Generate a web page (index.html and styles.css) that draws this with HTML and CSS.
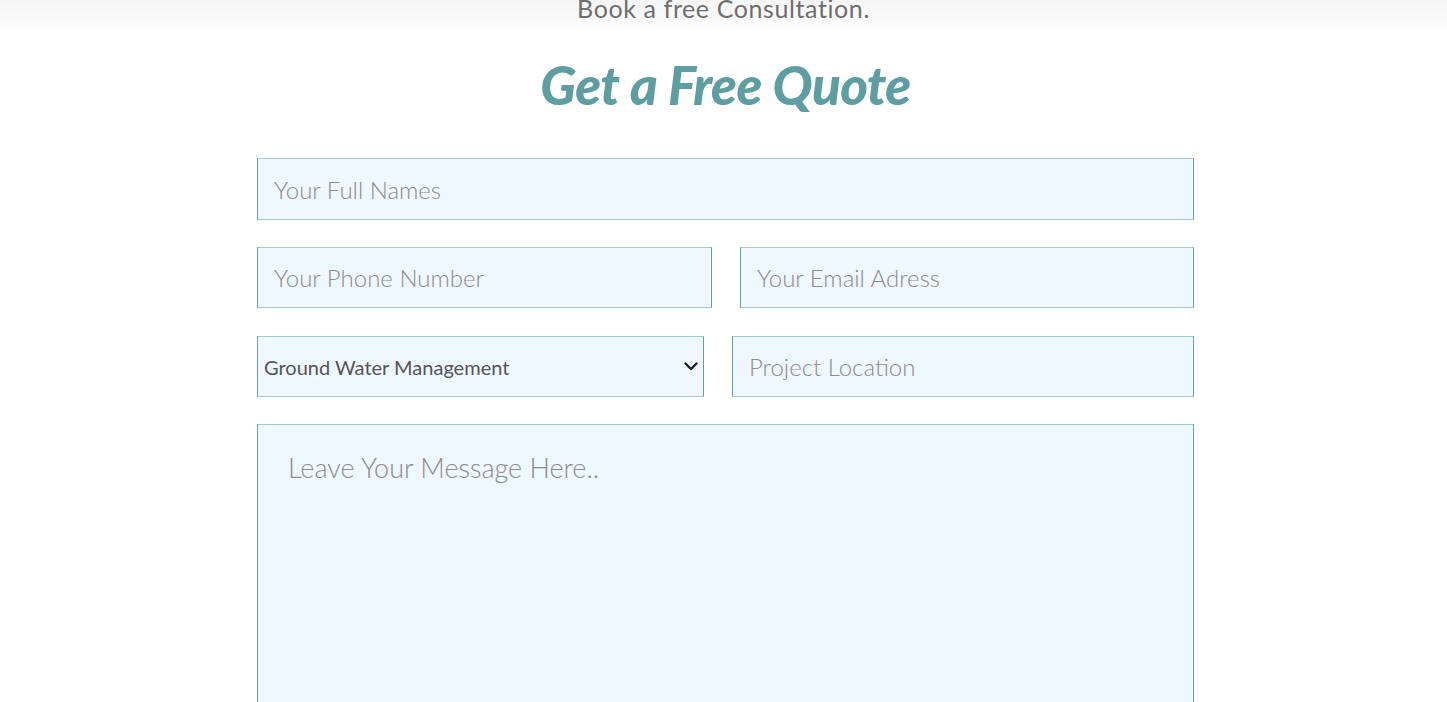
FILE: index.html
```html
<!DOCTYPE html>
<html lang="en">
<head>
<meta charset="utf-8">
<title>Get a Free Quote</title>
<link rel="stylesheet" href="styles.css">
</head>
<body>
<header class="topbar">
  <p class="topbar-text">Book a free Consultation.</p>
</header>
<main class="quote">
  <h1 class="quote-title">Get a Free Quote</h1>
  <form class="quote-form">
    <input class="field field-tall" type="text" placeholder="Your Full Names">
    <div class="row row-a">
      <input class="field" type="tel" placeholder="Your Phone Number">
      <input class="field" type="email" placeholder="Your Email Adress">
    </div>
    <div class="row row-b">
      <div class="select-wrap">
        <select class="field select">
          <option>Ground Water Management</option>
          <option>Borehole Drilling</option>
          <option>Pump Installation</option>
        </select>
        <svg class="chevron" width="14" height="9" viewBox="0 0 14 9" aria-hidden="true">
          <path d="M1.5 1.5 L7 7 L12.5 1.5" fill="none" stroke="#1e1e1e" stroke-width="2.4" stroke-linecap="round" stroke-linejoin="round"/>
        </svg>
      </div>
      <input class="field" type="text" placeholder="Project Location">
    </div>
    <textarea class="field message" placeholder="Leave Your Message Here.."></textarea>
  </form>
</main>
</body>
</html>
```
FILE: styles.css
```css
* { box-sizing: border-box; }
html, body { margin: 0; padding: 0; background: #ffffff; }
body { font-family: "Lato", "Open Sans", sans-serif; }

.topbar {
  height: 36px;
  overflow: hidden;
  background: linear-gradient(to bottom, #f5f5f5 0%, #fbfbfb 60%, #ffffff 100%);
  text-align: center;
}
.topbar-text {
  margin: 0;
  font-size: 25px;
  line-height: 17px;
  color: #6e6e6e;
  letter-spacing: 0.6px;
}

.quote {
  width: 937px;
  margin: 0 0 0 calc(50% - 466.5px);
}
.quote-title {
  margin: 13px 0 0;
  text-align: center;
  font-family: "Lato", sans-serif;
  font-weight: 900;
  font-style: italic;
  font-size: 53px;
  line-height: 72px;
  color: #5f9ea0;
  letter-spacing: -0.6px;
}

.quote-form {
  margin-top: 37px;
  display: flex;
  flex-direction: column;
  gap: 27px;
}
.row {
  display: grid;
  gap: 28px;
}
.row-a { grid-template-columns: 455px 1fr; }
.row-b { grid-template-columns: 447px 1fr; margin-top: 1px; }

.field {
  display: block;
  width: 100%;
  height: 61px;
  margin: 0;
  padding: 0 16px;
  background: #eff7ff;
  border: 1px solid;
  border-color: #a3cacd #64a0a2 #a3cacd #64a0a2;
  border-radius: 0;
  font-family: "Lato", sans-serif;
  font-weight: 300;
  font-size: 24px;
  color: #555;
  outline: none;
}
.field-tall { height: 62px; }
.field::placeholder { color: #8c8c8c; opacity: 1; }

.select-wrap { position: relative; }
.select {
  -webkit-appearance: none;
  appearance: none;
  padding: 0 30px 0 6px;
  font-weight: 400;
  font-size: 20px;
  color: #555;
}
.chevron {
  position: absolute;
  top: 26px;
  right: 6px;
  pointer-events: none;
}

.message {
  height: 300px;
  padding: 26px 30px;
  font-size: 27px;
  resize: none;
}
```
